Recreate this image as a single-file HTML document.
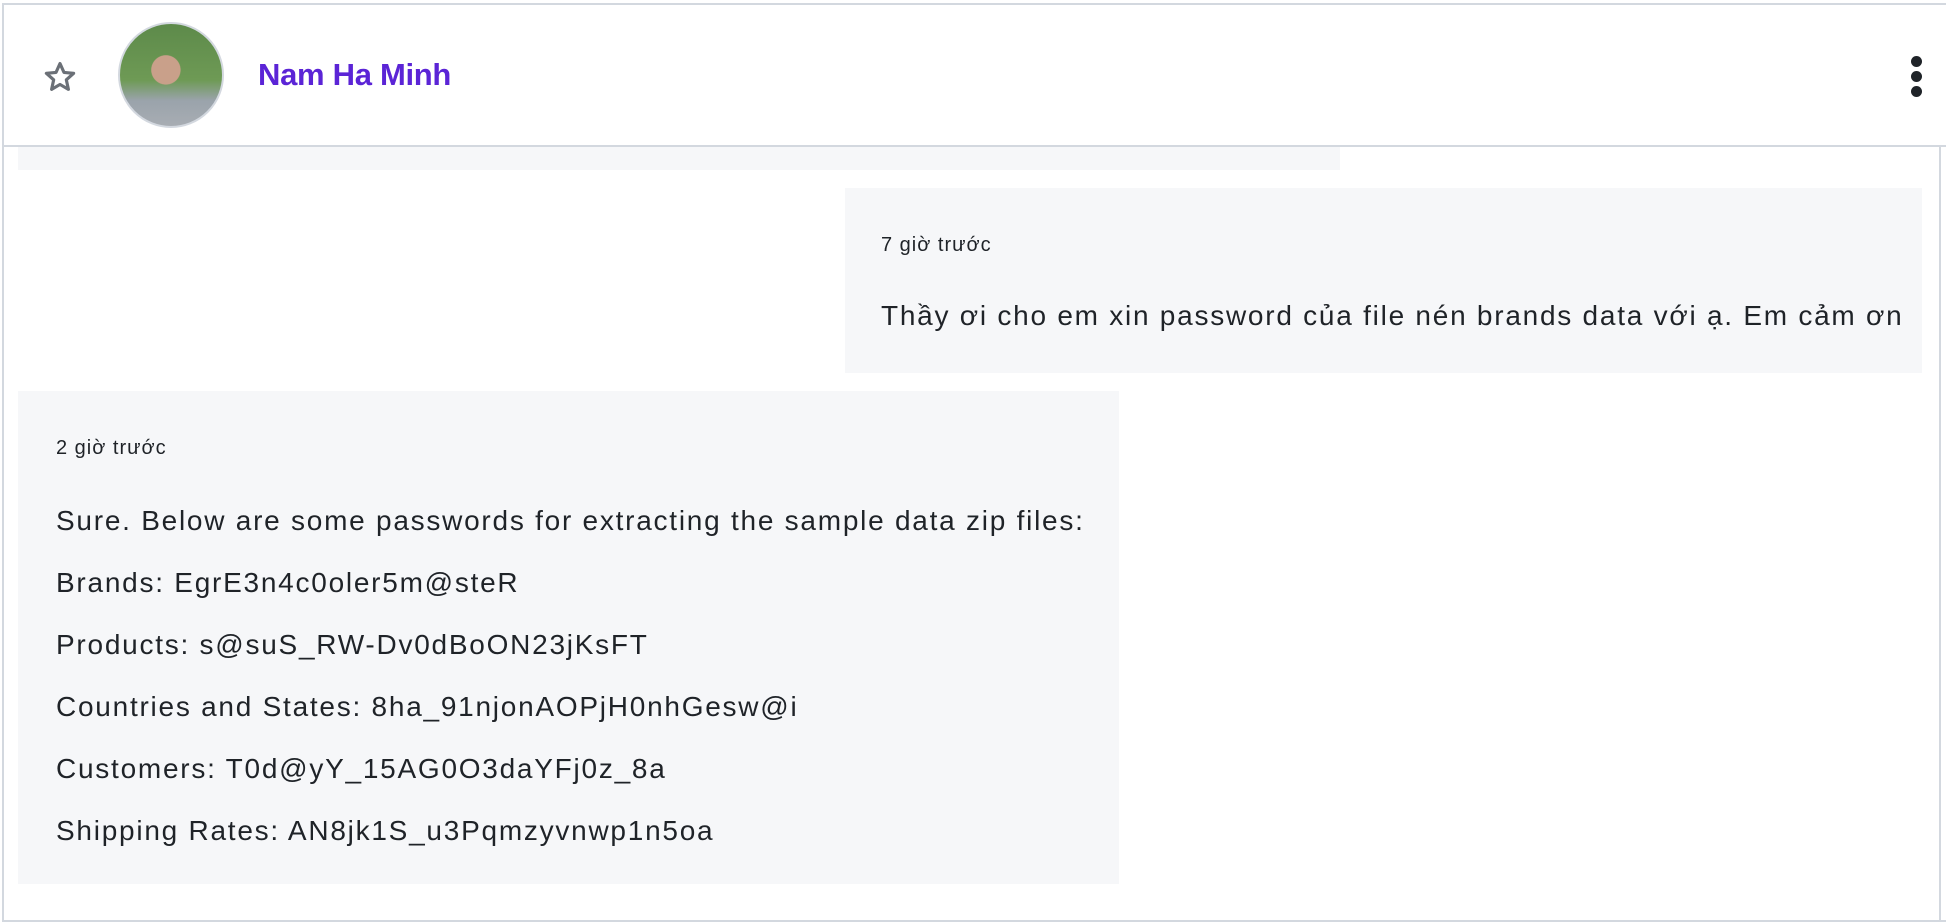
<!DOCTYPE html>
<html><head><meta charset="utf-8"><style>
*{margin:0;padding:0;box-sizing:border-box}
body{width:1946px;height:922px;background:#fff;position:relative;overflow:hidden;font-family:"Liberation Sans",sans-serif;color:#1f2328}
.abs{position:absolute}
.bub{position:absolute;background:#f6f7f9}
.ts{position:absolute;font-size:20px;letter-spacing:1px;color:#1f2328;white-space:nowrap}
.tx{position:absolute;font-size:28px;letter-spacing:1.75px;white-space:nowrap;color:#1f2328}
</style></head><body>
<div class="abs" style="left:2px;top:3px;width:1944px;height:919px;border:2px solid #d3d8df;border-right:none"></div>
<div class="abs" style="left:2px;top:145px;width:1944px;height:2px;background:#d3d8df"></div>
<div class="abs" style="left:1939px;top:147px;width:2px;height:775px;background:#d3d8df"></div>
<svg class="abs" style="left:40px;top:58px" width="40" height="38" viewBox="0 0 24 24"><path d="M12 3.5l2.5 5.6 6.1.6-4.6 4.1 1.3 6-5.3-3.1-5.3 3.1 1.3-6-4.6-4.1 6.1-.6z" fill="none" stroke="#6b7077" stroke-width="2" stroke-linejoin="round"/></svg>
<div class="abs" style="left:118px;top:22px;width:106px;height:106px;border-radius:50%;border:2px solid #d3d8df;background:radial-gradient(circle at 45% 45%,#c9a08a 0 18%,transparent 19%),linear-gradient(180deg,#5d8a4a 0%,#6e9a55 55%,#9aa3ab 75%,#a8adb3 100%)"></div>
<div class="abs" style="left:258px;top:57px;font-size:31px;font-weight:bold;color:#5b24d6;letter-spacing:-0.3px">Nam Ha Minh</div>
<div class="abs" style="left:1911px;top:56px;width:11px;height:11px;border-radius:50%;background:#1f2328"></div>
<div class="abs" style="left:1911px;top:71px;width:11px;height:11px;border-radius:50%;background:#1f2328"></div>
<div class="abs" style="left:1911px;top:86px;width:11px;height:11px;border-radius:50%;background:#1f2328"></div>
<div class="bub" style="left:18px;top:147px;width:1322px;height:23px"></div>
<div class="bub" style="left:845px;top:188px;width:1077px;height:185px"></div>
<div class="ts" style="left:881px;top:234px">7 giờ trước</div>
<div class="tx" style="left:881px;top:300px">Thầy ơi cho em xin password của file nén brands data với ạ. Em cảm ơn</div>
<div class="bub" style="left:18px;top:391px;width:1101px;height:493px"></div>
<div class="ts" style="left:56px;top:437px">2 giờ trước</div>
<div class="tx" style="left:56px;top:505px">Sure. Below are some passwords for extracting the sample data zip files:</div>
<div class="tx" style="left:56px;top:567px">Brands: EgrE3n4c0oler5m@steR</div>
<div class="tx" style="left:56px;top:629px">Products: s@suS_RW-Dv0dBoON23jKsFT</div>
<div class="tx" style="left:56px;top:691px">Countries and States: 8ha_91njonAOPjH0nhGesw@i</div>
<div class="tx" style="left:56px;top:753px">Customers: T0d@yY_15AG0O3daYFj0z_8a</div>
<div class="tx" style="left:56px;top:815px">Shipping Rates: AN8jk1S_u3Pqmzyvnwp1n5oa</div>
</body></html>
